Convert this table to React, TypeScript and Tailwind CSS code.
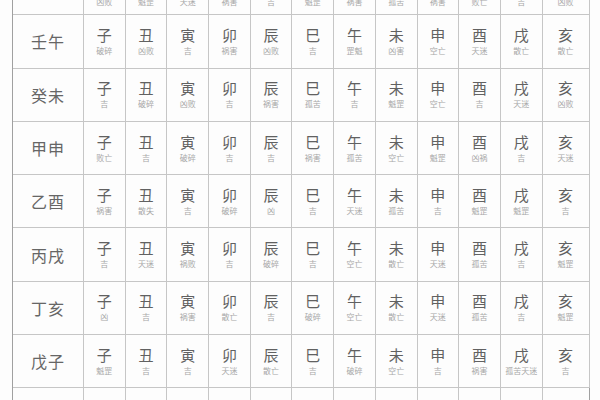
import React from 'react';

const branches = ['子', '丑', '寅', '卯', '辰', '巳', '午', '未', '申', '酉', '戌', '亥'];

// each row: label + 12 verdicts, in branch order
const rows: { label: string; notes: string[] }[] = [
  { label: '辛巳', notes: ['凶败', '魁罡', '天迷', '祸害', '吉', '魁罡', '祸害', '孤苦', '祸害', '败亡', '吉', '凶败'] },
  { label: '壬午', notes: ['破碎', '凶败', '吉', '祸害', '凶败', '吉', '罡魁', '凶害', '空亡', '天迷', '散亡', '散亡'] },
  { label: '癸未', notes: ['吉', '破碎', '凶败', '吉', '祸害', '孤苦', '吉', '魁罡', '空亡', '吉', '天迷', '凶败'] },
  { label: '甲申', notes: ['败亡', '吉', '破碎', '吉', '吉', '祸害', '孤苦', '空亡', '魁罡', '凶祸', '吉', '天迷'] },
  { label: '乙酉', notes: ['祸害', '散失', '吉', '破碎', '凶', '吉', '天迷', '孤苦', '吉', '魁罡', '魁罡', '吉'] },
  { label: '丙戌', notes: ['吉', '天迷', '祸败', '吉', '破碎', '吉', '空亡', '散亡', '天迷', '孤苦', '吉', '魁罡'] },
  { label: '丁亥', notes: ['凶', '吉', '祸害', '散亡', '吉', '破碎', '空亡', '散亡', '天迷', '孤苦', '吉', '魁罡'] },
  { label: '戊子', notes: ['魁罡', '吉', '吉', '天迷', '散亡', '吉', '破碎', '空亡', '吉', '祸害', '孤苦天迷', '吉'] },
];

export default function App() {
  return (
    <div
      className="w-[600px] h-[400px] overflow-hidden bg-[#fdfdfd] pl-[12px]"
      style={{ fontFamily: '"Noto Sans CJK SC", "Noto Sans CJK JP", sans-serif' }}
    >
      <div className="mt-[-38px] grid grid-cols-[71px_repeat(11,41.7px)_47px] auto-rows-[53.3px] border-l-[1.5px] border-r-[1.5px] border-[#a0a0a0] w-[578px]">
        {rows.map((row, r) => (
          <React.Fragment key={row.label}>
            <div className="flex items-center justify-center border-r border-b border-[#c6c6c6] text-[16px] text-[#666] tracking-[1px]">
              {r > 0 ? row.label : ''}
            </div>
            {branches.map((b, i) => (
              <div
                key={b}
                className={
                  r > 0
                    ? 'flex flex-col items-center justify-center border-r border-b border-[#c6c6c6] last:border-r-0'
                    : 'flex flex-col items-center justify-end pb-[7px] border-r border-b border-[#c6c6c6] last:border-r-0'
                }
              >
                {r > 0 && <span className="text-[15px] leading-[16px] text-[#616161]">{b}</span>}
                <span className="mt-[3px] text-[8px] leading-[10px] text-[#a8a8a8] whitespace-nowrap">
                  {row.notes[i]}
                </span>
              </div>
            ))}
          </React.Fragment>
        ))}
        {/* last row, only its top edge shows */}
        <div className="border-r border-[#c6c6c6]" />
        {branches.map((b) => (
          <div key={b} className="border-r border-[#c6c6c6] last:border-r-0" />
        ))}
      </div>
    </div>
  );
}
